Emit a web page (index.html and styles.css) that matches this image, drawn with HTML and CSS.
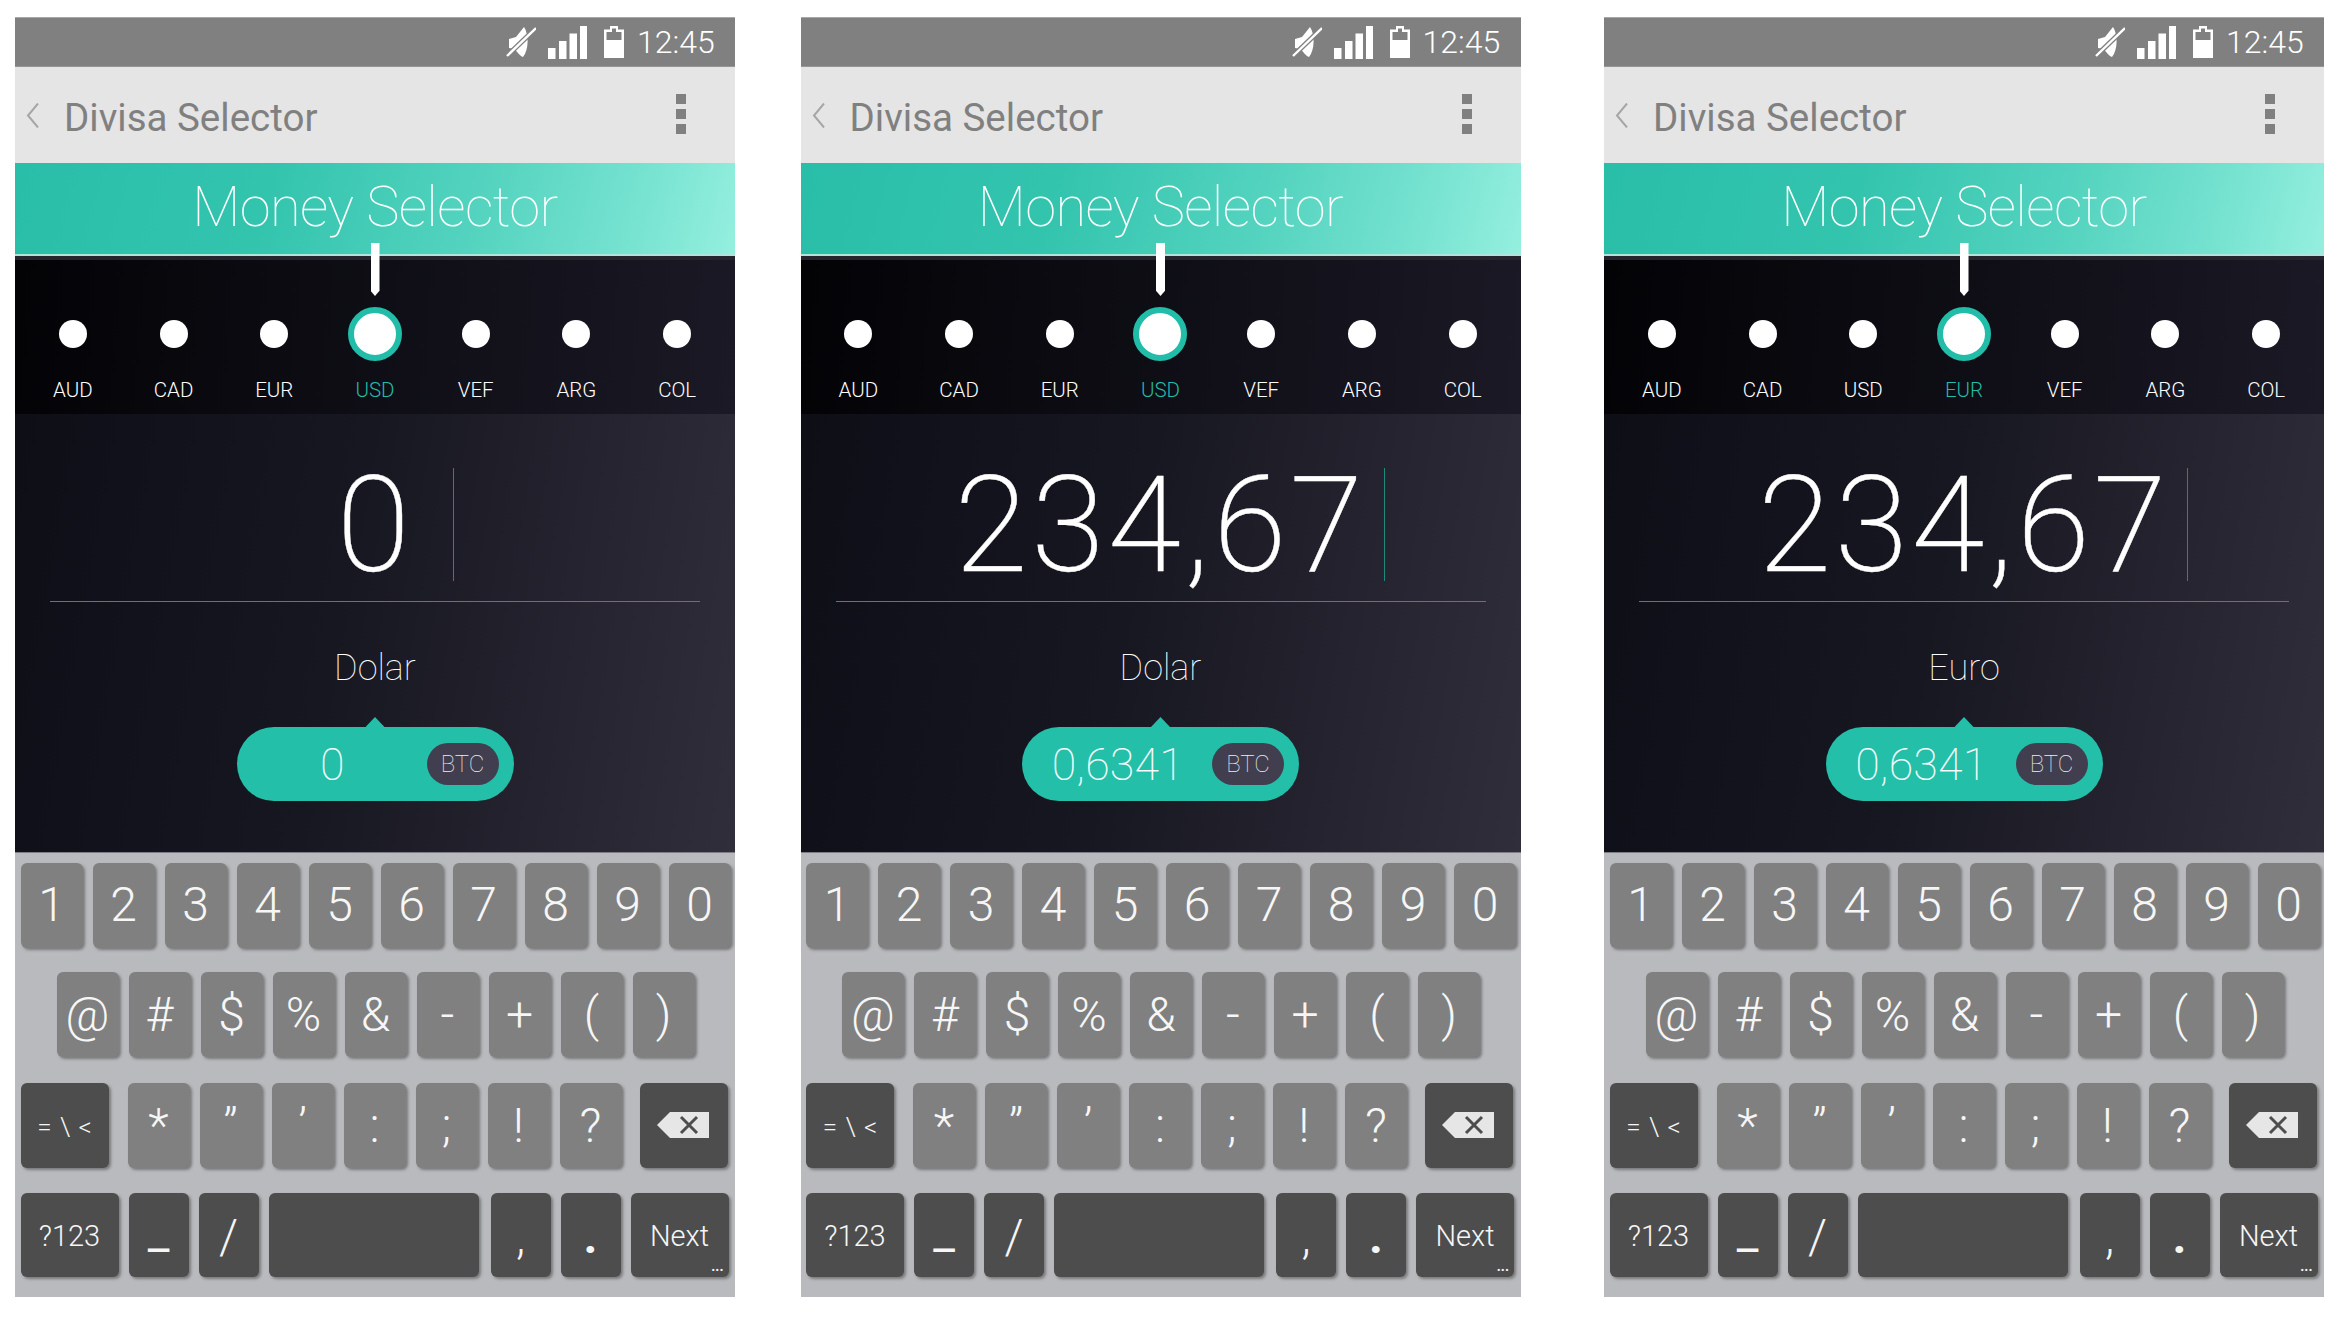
FILE: index.html
```html
<!DOCTYPE html>
<html lang="es">
<head>
<meta charset="utf-8">
<title>Divisa Selector</title>
<link rel="stylesheet" href="styles.css">
</head>
<body>
<svg class="sprite">
	<symbol id="mute" viewBox="0 0 30 32">
		<path fill="#fff" d="M3 13 L10 11 L18 1 C23 8 23 24 17 31 C14 30 11 26 9 23 L3 22 Z"/>
		<path stroke="#808080" stroke-width="5" d="M30 2 L1 30"/>
		<path stroke="#fff" stroke-width="2.4" d="M30 2 L1 30"/>
	</symbol>
	<symbol id="signal" viewBox="0 0 39 33">
		<path fill="#fff" d="M0 22 H7.5 V33 H0 Z M11 15 H18.5 V33 H11 Z M21.5 7.5 H29 V33 H21.5 Z M32 0 H39 V33 H32 Z"/>
	</symbol>
	<symbol id="battery" viewBox="0 0 20 32">
		<path fill="#fff" fill-rule="evenodd" d="M6 0 H14 V3.5 H20 V32 H0 V3.5 H6 Z M2.5 6 V14 H17.5 V6 H12 V2.5 H8 V6 Z"/>
	</symbol>
	<symbol id="erase" viewBox="0 0 52 26">
		<path fill="#e6e6e6" d="M13 0 H52 V26 H13 L0 13 Z"/>
		<path stroke="#4d4d4d" stroke-width="3" d="M24 5 L40 21 M40 5 L24 21"/>
	</symbol>
</svg>

<div class="screens">

	<!-- empty amount -->
	<div class="phone">
		<div class="status">
			<svg class="ic-mute"><use href="#mute"/></svg>
			<svg class="ic-signal"><use href="#signal"/></svg>
			<svg class="ic-battery"><use href="#battery"/></svg>
			<span class="clock">12:45</span>
		</div>
		<div class="appbar">
			<svg class="back" viewBox="0 0 13 25"><path d="M12 0.5 L2 12.5 L12 24.5"/></svg>
			<span class="apptitle">Divisa Selector</span>
			<div class="dots"><i></i><i></i><i></i></div>
		</div>
		<div class="banner">Money Selector</div>
		<div class="picker">
			<div class="pin"></div>
			<div class="cur"><span class="dot"></span><span class="code">AUD</span></div>
			<div class="cur"><span class="dot"></span><span class="code">CAD</span></div>
			<div class="cur"><span class="dot"></span><span class="code">EUR</span></div>
			<div class="cur on"><span class="dot"></span><span class="code">USD</span></div>
			<div class="cur"><span class="dot"></span><span class="code">VEF</span></div>
			<div class="cur"><span class="dot"></span><span class="code">ARG</span></div>
			<div class="cur"><span class="dot"></span><span class="code">COL</span></div>
		</div>
		<div class="main">
			<div class="amount">0<span class="caret"></span></div>
			<div class="curname">Dolar</div>
			<div class="pill"><span class="pillval">0</span><span class="chip">BTC</span></div>
		</div>
		<div class="kb">
			<div class="row r1"><b class="key">1</b><b class="key">2</b><b class="key">3</b><b class="key">4</b><b class="key">5</b><b class="key">6</b><b class="key">7</b><b class="key">8</b><b class="key">9</b><b class="key">0</b></div>
			<div class="row r2"><b class="key">@</b><b class="key">#</b><b class="key">$</b><b class="key">%</b><b class="key">&amp;</b><b class="key">-</b><b class="key">+</b><b class="key">(</b><b class="key">)</b></div>
			<div class="row r3"><b class="key dark wide small">= \ &lt;</b><b class="key">*</b><b class="key">”</b><b class="key">’</b><b class="key">:</b><b class="key">;</b><b class="key">!</b><b class="key">?</b><b class="key dark wide"><svg class="ic-erase"><use href="#erase"/></svg></b></div>
			<div class="row r4"><b class="key dark act">?123</b><b class="key dark sym under">_</b><b class="key dark sym">/</b><b class="key dark space"></b><b class="key dark sym">,</b><b class="key dark sym stop">.</b><b class="key dark act">Next<span class="more">...</span></b></div>
		</div>
	</div>

	<!-- typed amount, dolar -->
	<div class="phone">
		<div class="status">
			<svg class="ic-mute"><use href="#mute"/></svg>
			<svg class="ic-signal"><use href="#signal"/></svg>
			<svg class="ic-battery"><use href="#battery"/></svg>
			<span class="clock">12:45</span>
		</div>
		<div class="appbar">
			<svg class="back" viewBox="0 0 13 25"><path d="M12 0.5 L2 12.5 L12 24.5"/></svg>
			<span class="apptitle">Divisa Selector</span>
			<div class="dots"><i></i><i></i><i></i></div>
		</div>
		<div class="banner">Money Selector</div>
		<div class="picker">
			<div class="pin"></div>
			<div class="cur"><span class="dot"></span><span class="code">AUD</span></div>
			<div class="cur"><span class="dot"></span><span class="code">CAD</span></div>
			<div class="cur"><span class="dot"></span><span class="code">EUR</span></div>
			<div class="cur on"><span class="dot"></span><span class="code">USD</span></div>
			<div class="cur"><span class="dot"></span><span class="code">VEF</span></div>
			<div class="cur"><span class="dot"></span><span class="code">ARG</span></div>
			<div class="cur"><span class="dot"></span><span class="code">COL</span></div>
		</div>
		<div class="main">
			<div class="amount">234,67<span class="caret far"></span></div>
			<div class="curname">Dolar</div>
			<div class="pill"><span class="pillval">0,6341</span><span class="chip">BTC</span></div>
		</div>
		<div class="kb">
			<div class="row r1"><b class="key">1</b><b class="key">2</b><b class="key">3</b><b class="key">4</b><b class="key">5</b><b class="key">6</b><b class="key">7</b><b class="key">8</b><b class="key">9</b><b class="key">0</b></div>
			<div class="row r2"><b class="key">@</b><b class="key">#</b><b class="key">$</b><b class="key">%</b><b class="key">&amp;</b><b class="key">-</b><b class="key">+</b><b class="key">(</b><b class="key">)</b></div>
			<div class="row r3"><b class="key dark wide small">= \ &lt;</b><b class="key">*</b><b class="key">”</b><b class="key">’</b><b class="key">:</b><b class="key">;</b><b class="key">!</b><b class="key">?</b><b class="key dark wide"><svg class="ic-erase"><use href="#erase"/></svg></b></div>
			<div class="row r4"><b class="key dark act">?123</b><b class="key dark sym under">_</b><b class="key dark sym">/</b><b class="key dark space"></b><b class="key dark sym">,</b><b class="key dark sym stop">.</b><b class="key dark act">Next<span class="more">...</span></b></div>
		</div>
	</div>

	<!-- typed amount, euro -->
	<div class="phone">
		<div class="status">
			<svg class="ic-mute"><use href="#mute"/></svg>
			<svg class="ic-signal"><use href="#signal"/></svg>
			<svg class="ic-battery"><use href="#battery"/></svg>
			<span class="clock">12:45</span>
		</div>
		<div class="appbar">
			<svg class="back" viewBox="0 0 13 25"><path d="M12 0.5 L2 12.5 L12 24.5"/></svg>
			<span class="apptitle">Divisa Selector</span>
			<div class="dots"><i></i><i></i><i></i></div>
		</div>
		<div class="banner">Money Selector</div>
		<div class="picker">
			<div class="pin"></div>
			<div class="cur"><span class="dot"></span><span class="code">AUD</span></div>
			<div class="cur"><span class="dot"></span><span class="code">CAD</span></div>
			<div class="cur"><span class="dot"></span><span class="code">USD</span></div>
			<div class="cur on"><span class="dot"></span><span class="code">EUR</span></div>
			<div class="cur"><span class="dot"></span><span class="code">VEF</span></div>
			<div class="cur"><span class="dot"></span><span class="code">ARG</span></div>
			<div class="cur"><span class="dot"></span><span class="code">COL</span></div>
		</div>
		<div class="main">
			<div class="amount">234,67<span class="caret far"></span></div>
			<div class="curname">Euro</div>
			<div class="pill"><span class="pillval">0,6341</span><span class="chip">BTC</span></div>
		</div>
		<div class="kb">
			<div class="row r1"><b class="key">1</b><b class="key">2</b><b class="key">3</b><b class="key">4</b><b class="key">5</b><b class="key">6</b><b class="key">7</b><b class="key">8</b><b class="key">9</b><b class="key">0</b></div>
			<div class="row r2"><b class="key">@</b><b class="key">#</b><b class="key">$</b><b class="key">%</b><b class="key">&amp;</b><b class="key">-</b><b class="key">+</b><b class="key">(</b><b class="key">)</b></div>
			<div class="row r3"><b class="key dark wide small">= \ &lt;</b><b class="key">*</b><b class="key">”</b><b class="key">’</b><b class="key">:</b><b class="key">;</b><b class="key">!</b><b class="key">?</b><b class="key dark wide"><svg class="ic-erase"><use href="#erase"/></svg></b></div>
			<div class="row r4"><b class="key dark act">?123</b><b class="key dark sym under">_</b><b class="key dark sym">/</b><b class="key dark space"></b><b class="key dark sym">,</b><b class="key dark sym stop">.</b><b class="key dark act">Next<span class="more">...</span></b></div>
		</div>
	</div>

</div>
</body>
</html>
```

FILE: styles.css
```css
*{box-sizing:border-box;}

body{margin:0;background:#fff;font-family:Roboto,"Liberation Sans",sans-serif;overflow:hidden;}

.sprite{display:none;}

.screens{display:flex;padding:17px 0 0 15px;}

.phone{width:720px;height:1280px;flex:none;margin-right:65.5px;display:flex;flex-direction:column;}
.phone + .phone + .phone{margin-left:18px;}

/* status bar */
.status{height:50px;background:#808080;border-top:1px solid #a8a8a8;border-bottom:1px solid #969696;display:flex;align-items:center;padding-right:19px;justify-content:flex-end;color:#fff;}
.ic-mute{width:30px;height:32px;margin-right:12px;}
.ic-signal{width:39px;height:33px;margin-right:17px;}
.ic-battery{width:20px;height:32px;margin-right:13px;}
.clock{font-size:32px;font-weight:300;line-height:1;width:79px;}

/* app bar */
.appbar{height:96px;background:#e5e5e5;display:flex;align-items:center;color:#808080;padding:0 49px 0 11px;}
.back{width:13px;height:25px;margin-right:26px;fill:none;stroke:#a6a6a6;stroke-width:2;}
.apptitle{font-size:38.5px;flex:1;padding-top:4px;margin-left:-1px;}
.dots{display:flex;flex-direction:column;gap:5px;margin-top:-2px;}
.dots i{display:block;width:10px;height:10px;background:#808080;}

/* banner */
.banner{height:93px;background:linear-gradient(105deg,#29bea8 0%,#33c4ae 35%,#55d4c0 65%,#78e3d1 86%,#95efdf 100%);border-bottom:2px solid #aee4da;color:#fff;font-size:56px;font-weight:100;letter-spacing:-.6px;text-align:center;line-height:88px;}

/* currency picker */
.picker{height:158px;position:relative;background:linear-gradient(95deg,#030306,#1a1925);border-top:4px solid #26252d;display:grid;grid-template-columns:repeat(7,1fr);padding:47px 7.5px 0;}
.pin{position:absolute;left:355.5px;top:-17px;width:9px;height:53px;background:#fff;clip-path:polygon(0 0,100% 0,100% 90%,50% 100%,0 90%);}
.cur{display:flex;flex-direction:column;align-items:center;}
.dot{width:28px;height:28px;margin:13px 0;border-radius:50%;background:#fff;}
.on .dot{width:54px;height:54px;margin:0;border:6px solid #22bda8;}
.code{font-size:20.5px;font-weight:300;color:#fff;line-height:24px;margin-top:17px;}
.on .code{color:#22bda8;}

/* amount */
.main{height:438px;background:linear-gradient(100deg,#0e0e17 0%,#171722 45%,#302e3a 100%);color:#fff;display:flex;flex-direction:column;align-items:center;}
.amount{width:650px;height:188px;margin:0 auto;border-bottom:1px solid #2a8f84;position:relative;padding-top:49px;font-size:133px;font-weight:200;letter-spacing:3.5px;line-height:126px;text-align:center;-webkit-text-stroke:.4px #fff;}
.caret{position:absolute;left:403px;top:54px;width:1px;height:113px;background:#20897d;}
.caret.far{left:548px;}
.curname{font-size:36px;font-weight:100;line-height:50px;margin-top:41px;}

.pill{width:277px;height:74px;margin-top:34px;border-radius:37px;background:#24bfa9;display:flex;align-items:center;padding-right:15px;position:relative;}
.pill:before{content:"";position:absolute;left:129px;top:-10px;width:19px;height:10px;background:#24bfa9;clip-path:polygon(50% 0,100% 100%,0 100%);}
.pillval{flex:1;text-align:center;font-size:44px;font-weight:100;letter-spacing:.6px;padding-top:2px;padding-left:2px;color:#fff;-webkit-text-stroke:.2px #fff;}
.chip{width:72px;height:42px;border-radius:21px;background:#413e50;color:#eee;font-size:24px;font-weight:100;text-align:center;line-height:43px;}

/* keyboard */
.kb{flex:1;background:#b9babd;padding:10px 5.5px 0;border-top:1px solid #7d7d83;}
.row{display:flex;height:85px;gap:10px;}
.r2{margin-top:24px;padding-left:36px;}
.r3{margin-top:26px;}
.r3 .wide:last-child{margin-left:8px;}
.r3 .wide:first-child{margin-right:9px;}
.r4{margin-top:25px;height:84px;}
.key{width:62px;flex:none;border-radius:6px;background:#808080;box-shadow:2px 2px 3px rgba(0,0,0,.35);color:#f6f6f6;font-size:48px;font-weight:300;text-align:center;line-height:83px;position:relative;display:block;}
.r2 .key{line-height:85px;}
.r3 .key{line-height:86px;}
.r4 .key{line-height:87px;}
.dark{background:#4d4d4d;}
.wide{width:88px;}
.r3 .small{font-size:26px;line-height:88px;word-spacing:2px;}
.act{width:98px;font-size:29px;}
.sym{width:60px;}
.r4 .under{line-height:77px;font-weight:400;}
.stop{font-weight:700;}
.space{width:210px;}
.r4 .space{margin-right:2px;}
.ic-erase{width:52px;height:26px;position:absolute;left:17px;top:29px;}
.more{position:absolute;right:5px;bottom:6px;font-size:14px;font-weight:700;line-height:10px;letter-spacing:0;}
```
